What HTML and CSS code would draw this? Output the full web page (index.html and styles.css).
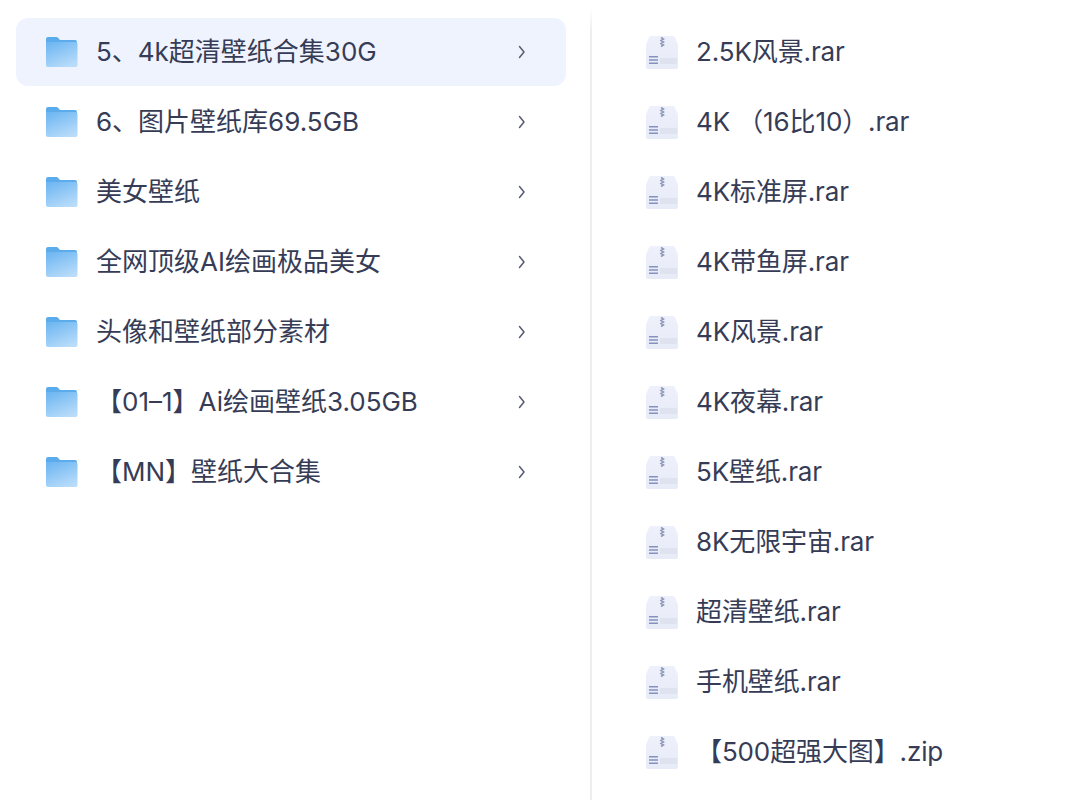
FILE: index.html
```html
<!DOCTYPE html>
<html lang="zh">
<head>
<meta charset="utf-8">
<title>文件列表</title>
<link rel="stylesheet" href="styles.css">
</head>
<body>
<svg width="0" height="0" class="defs">
  <defs>
    <linearGradient id="fg" x1="0.2" y1="0" x2="0.7" y2="1">
      <stop offset="0" stop-color="#6fb7f2"/>
      <stop offset="1" stop-color="#b9dcfa"/>
    </linearGradient>
    <linearGradient id="zg" x1="0" y1="0" x2="0" y2="1">
      <stop offset="0" stop-color="#eef1fb"/>
      <stop offset="1" stop-color="#e7ebf8"/>
    </linearGradient>
    <symbol id="folder" viewBox="0 0 32 30">
      <path d="M0 2a2 2 0 0 1 2-2h8.500a2 2 0 0 1 1.500.700L14 3h15a2 2 0 0 1 2 2v2H0z" fill="#5cabea"/>
      <path d="M0 5h29.500a2 2 0 0 1 2 2v21a2 2 0 0 1-2 2H2a2 2 0 0 1-2-2z" fill="url(#fg)"/>
    </symbol>
    <symbol id="zip" viewBox="0 0 32 33">
      <path d="M5 0h22a2 2 0 0 1 2 1.500l3 7V31a2 2 0 0 1-2 2H2a2 2 0 0 1-2-2V8.500l3-7A2 2 0 0 1 5 0z" fill="url(#zg)"/>
      <path d="M15 1.500l2.500 1.500-2.500 1.500 2.500 1.500-2.500 1.500 2.500 1.500-2.500 1.500" fill="none" stroke="#8f99ba" stroke-width="1.500"/>
      <path d="M3 20h9v1.600H3zM3 23.200h9v1.600H3zM3 26.400h9v1.600H3z" fill="#8492bd"/>
      <path d="M14 22h17v6H14z" fill="#dfe3f0"/>
    </symbol>
    <symbol id="chev" viewBox="0 0 8 14">
      <path d="M1.500 1.500 6 7l-4.500 5.500" fill="none" stroke="#565b72" stroke-width="1.500" stroke-linecap="round" stroke-linejoin="round"/>
    </symbol>
  </defs>
</svg>
<main class="panes">
  <ul class="list list-left">
    <li class="row row-active"><svg class="ico-folder"><use href="#folder"/></svg><span class="name">5、4k超清壁纸合集30G</span><svg class="ico-chev"><use href="#chev"/></svg></li>
    <li class="row"><svg class="ico-folder"><use href="#folder"/></svg><span class="name">6、图片壁纸库69.5GB</span><svg class="ico-chev"><use href="#chev"/></svg></li>
    <li class="row"><svg class="ico-folder"><use href="#folder"/></svg><span class="name">美女壁纸</span><svg class="ico-chev"><use href="#chev"/></svg></li>
    <li class="row"><svg class="ico-folder"><use href="#folder"/></svg><span class="name">全网顶级AI绘画极品美女</span><svg class="ico-chev"><use href="#chev"/></svg></li>
    <li class="row"><svg class="ico-folder"><use href="#folder"/></svg><span class="name">头像和壁纸部分素材</span><svg class="ico-chev"><use href="#chev"/></svg></li>
    <li class="row"><svg class="ico-folder"><use href="#folder"/></svg><span class="name">【01–1】Ai绘画壁纸3.05GB</span><svg class="ico-chev"><use href="#chev"/></svg></li>
    <li class="row"><svg class="ico-folder"><use href="#folder"/></svg><span class="name">【MN】壁纸大合集</span><svg class="ico-chev"><use href="#chev"/></svg></li>
  </ul>
  <ul class="list list-right">
    <li class="row"><svg class="ico-zip"><use href="#zip"/></svg><span class="name">2.5K风景.rar</span></li>
    <li class="row"><svg class="ico-zip"><use href="#zip"/></svg><span class="name">4K （16比10）.rar</span></li>
    <li class="row"><svg class="ico-zip"><use href="#zip"/></svg><span class="name">4K标准屏.rar</span></li>
    <li class="row"><svg class="ico-zip"><use href="#zip"/></svg><span class="name">4K带鱼屏.rar</span></li>
    <li class="row"><svg class="ico-zip"><use href="#zip"/></svg><span class="name">4K风景.rar</span></li>
    <li class="row"><svg class="ico-zip"><use href="#zip"/></svg><span class="name">4K夜幕.rar</span></li>
    <li class="row"><svg class="ico-zip"><use href="#zip"/></svg><span class="name">5K壁纸.rar</span></li>
    <li class="row"><svg class="ico-zip"><use href="#zip"/></svg><span class="name">8K无限宇宙.rar</span></li>
    <li class="row"><svg class="ico-zip"><use href="#zip"/></svg><span class="name">超清壁纸.rar</span></li>
    <li class="row"><svg class="ico-zip"><use href="#zip"/></svg><span class="name">手机壁纸.rar</span></li>
    <li class="row"><svg class="ico-zip"><use href="#zip"/></svg><span class="name">【500超强大图】.zip</span></li>
  </ul>
</main>
</body>
</html>
```
FILE: styles.css
```css
* { box-sizing: border-box; }
html, body { margin: 0; height: 100%; overflow: hidden; background: #fff; }
body {
  font-family: Inter, "Noto Sans CJK SC", sans-serif;
  font-size: 26px;
  color: #363c56;
}
.defs { display: block; height: 0; }
.panes { display: flex; height: 800px; }
.list {
  list-style: none;
  margin: 0;
  display: flex;
  flex-direction: column;
  gap: 2px;
}
.list-left { width: 590px; padding: 18px 24px 0 16px; }
.list-right {
  flex: 1;
  margin-top: 8px;
  padding: 10px 0 0 54px;
  border-left: 2px solid #eceef1;
  border-image: linear-gradient(to bottom, #fff, #eceef1 24px) 1;
  letter-spacing: -0.12px;
}
.row {
  display: flex;
  align-items: center;
  height: 68px;
  flex: none;
  white-space: nowrap;
}
.row-active { background: #eff3fe; border-radius: 12px; }
.list-left .row { padding-left: 30px; }
.name { flex: 1; line-height: 36px; }
.ico-folder { width: 32px; height: 30px; margin-right: 18px; flex: none; }
.ico-chev { width: 8px; height: 14px; margin-right: 40px; flex: none; }
.ico-zip { width: 32px; height: 33px; margin-right: 18px; flex: none; }
```
